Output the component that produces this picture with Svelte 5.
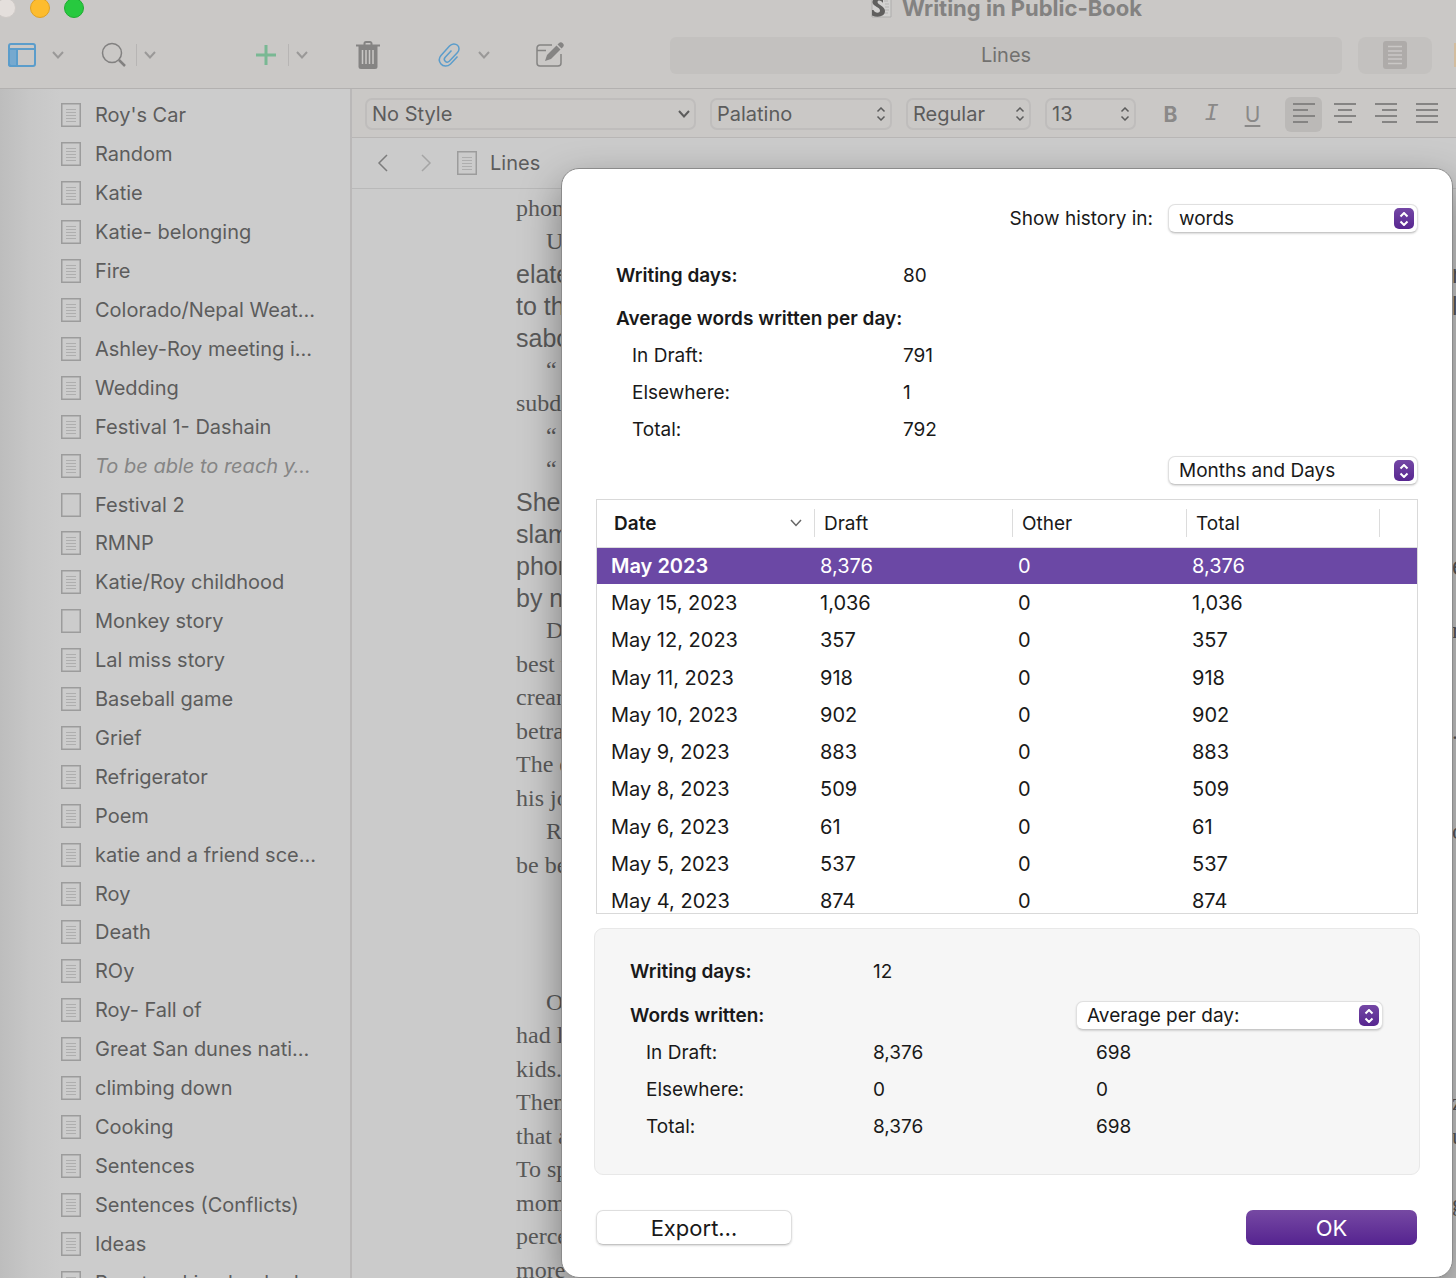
<script>
    const scenes = [
        "Roy's Car",
        "Random",
        "Katie",
        "Katie- belonging",
        "Fire",
        "Colorado/Nepal Weat…",
        "Ashley-Roy meeting i…",
        "Wedding",
        "Festival 1- Dashain",
        "To be able to reach y…",
        "Festival 2",
        "RMNP",
        "Katie/Roy childhood",
        "Monkey story",
        "Lal miss story",
        "Baseball game",
        "Grief",
        "Refrigerator",
        "Poem",
        "katie and a friend sce…",
        "Roy",
        "Death",
        "ROy",
        "Roy- Fall of",
        "Great San dunes nati…",
        "climbing down",
        "Cooking",
        "Sentences",
        "Sentences (Conflicts)",
        "Ideas",
        "Roast making booked",
    ];
    const blank = ["Festival 2", "Monkey story"];
    const untitled = ["To be able to reach y…"];

    // [kind, first words, last letters] per line; i = indented first line
    const manuscript = [
        ["serif", "phon"],
        ["serif i", "U"],
        ["sans", "elate", "n"],
        ["sans", "to th", "l"],
        ["sans", "sabo"],
        ["serif i", "“"],
        ["serif", "subd"],
        ["serif i", "“"],
        ["serif i", "“"],
        ["sans", "She"],
        ["sans", "slam"],
        ["sans", "phon", "e"],
        ["sans", "by no"],
        ["serif i", "D", "n"],
        ["wide", "best t"],
        ["serif", "crean"],
        ["wide", "betra", "."],
        ["serif", "The e"],
        ["wide", "his jo"],
        ["serif i", "R", "o"],
        ["wide", "be be"],
        ["break", ""],
        ["wide i", "O"],
        ["serif", "had l"],
        ["wide", "kids."],
        ["serif", "Then", "z"],
        ["wide", "that a", "u"],
        ["serif", "To sp"],
        ["wide", "mom", "g"],
        ["serif", "perce"],
        ["wide", "more"],
    ];

    const history = [
        ["May 2023", "8,376", "0", "8,376"],
        ["May 15, 2023", "1,036", "0", "1,036"],
        ["May 12, 2023", "357", "0", "357"],
        ["May 11, 2023", "918", "0", "918"],
        ["May 10, 2023", "902", "0", "902"],
        ["May 9, 2023", "883", "0", "883"],
        ["May 8, 2023", "509", "0", "509"],
        ["May 6, 2023", "61", "0", "61"],
        ["May 5, 2023", "537", "0", "537"],
        ["May 4, 2023", "874", "0", "874"],
    ];

    const averages = [
        ["In Draft:", "791"],
        ["Elsewhere:", "1"],
        ["Total:", "792"],
    ];
    const written = [
        ["In Draft:", "8,376", "698"],
        ["Elsewhere:", "0", "0"],
        ["Total:", "8,376", "698"],
    ];

    // x1, x2 of the four bars of each alignment button
    const alignments = [
        { name: "Align left", bars: [[0, 22], [0, 15], [0, 22], [0, 15]] },
        { name: "Align centre", bars: [[0, 22], [4, 18], [0, 22], [4, 18]] },
        { name: "Align right", bars: [[0, 22], [7, 22], [0, 22], [7, 22]] },
        { name: "Justify", bars: [[0, 22], [0, 22], [0, 22], [0, 22]] },
    ];

    let selected = 0;
    let align = 0;
</script>

{#snippet doc(empty)}
    <svg class="doc" width="20" height="24" viewBox="0 0 20 24" aria-hidden="true">
        <rect x="0.75" y="0.75" width="18.5" height="22.5" />
        {#if !empty}
            <path d="M5 6.5h10M5 9.5h10M5 12.5h10M5 15.5h10M5 18.5h10" />
        {/if}
    </svg>
{/snippet}

{#snippet chevron()}
    <svg class="chevron" width="12" height="8" viewBox="0 0 12 8" aria-hidden="true">
        <path d="M1 1l5 5.5L11 1" />
    </svg>
{/snippet}

{#snippet stepper()}
    <svg class="stepper" width="10" height="14" viewBox="0 0 10 14" aria-hidden="true">
        <path d="M1.5 4.5L5 1l3.5 3.5M1.5 9.5L5 13l3.5-3.5" />
    </svg>
{/snippet}

{#snippet popup(id, label, value)}
    <div class="popup">
        <select {id} aria-label={label}>
            <option>{value}</option>
        </select>
        <span class="knob">{@render stepper()}</span>
    </div>
{/snippet}

<div class="window">
    <header>
        <div class="titlebar">
            <div class="lights">
                <span class="light close"></span>
                <span class="light minimise"></span>
                <span class="light zoom"></span>
            </div>
            <div class="title">
                <svg width="22" height="22" viewBox="0 0 22 22" aria-hidden="true">
                    <path d="M2 0h17l2 3v17H2z" fill="#d2d1d0" stroke="#adacab" stroke-width="1" />
                    <path d="M14 4h4M15 7h4M15 10h4M15 13h4M14 16h4" stroke="#b5b4b3" stroke-width="1" />
                    <path d="M13 6V1.500C8 0 2 1 2.500 5.500c.5 4 7.500 4.500 7.500 8 0 3-5 3-6.500-.5L2 13v5.500c6 2.500 13 1 13-4.500C15 9 7.500 8 7.500 5c0-2.500 4-2 5.500 1z" fill="#605f5e" stroke="none" />
                </svg>
                <span>Writing in Public-Book</span>
            </div>
        </div>
        <div class="toolbar">
            <div class="tools">
                <button class="blue" aria-label="View">
                    <svg width="28" height="24" viewBox="0 0 28 24">
                        <path d="M1 6h8v17H3a2 2 0 0 1-2-2z" fill="#76a9cf" />
                        <rect x="1" y="1" width="26" height="22" rx="2" />
                        <path d="M1 6h26" />
                    </svg>
                </button>
                <button class="more" aria-label="View options">{@render chevron()}</button>
                <button class="search" aria-label="Search">
                    <svg width="26" height="26" viewBox="0 0 26 26">
                        <circle cx="11" cy="11" r="9.5" />
                        <path d="M18 18l6 6" stroke-width="2.5" />
                    </svg>
                </button>
                <button class="more split" aria-label="Search options">{@render chevron()}</button>
                <button class="add" aria-label="Add">
                    <svg width="20" height="20" viewBox="0 0 20 20">
                        <path d="M10 0v20M0 10h20" />
                    </svg>
                </button>
                <button class="more split" aria-label="Add options">{@render chevron()}</button>
                <button class="trash" aria-label="Move to trash">
                    <svg width="24" height="28" viewBox="0 0 24 28">
                        <path d="M0 4.500h24M8.500 4V2.500a1.500 1.500 0 0 1 1.500-1.500h4a1.500 1.500 0 0 1 1.500 1.500V4" />
                        <path d="M2.500 5h19v20.500a2.500 2.500 0 0 1-2.500 2.500H5a2.500 2.500 0 0 1-2.500-2.500z" class="fill" />
                        <path d="M6.500 9v14M10 9v14M13.500 9v14M17 9v14" class="slot" />
                    </svg>
                </button>
                <button class="clip blue" aria-label="Bookmarks">
                    <svg width="22" height="24" viewBox="0 0 22 24">
                        <path
                            d="M19.500 13.500l-7 7.500c-3 3-7.500 2.500-9.500 0s-2.500-5.500 0-8.500l8.500-9.500c2.500-2.700 6-2.500 8-.7s2 5 0 7.200l-8 8.500c-1.300 1.300-3.200 1.300-4.300.2s-1.200-2.700 0-4L13.500 7.500"
                        />
                    </svg>
                </button>
                <button class="more" aria-label="Bookmark options">{@render chevron()}</button>
                <button class="compose" aria-label="Compose">
                    <svg width="28" height="26" viewBox="0 0 28 26">
                        <path d="M16 3H4a3 3 0 0 0-3 3v15a3 3 0 0 0 3 3h18a3 3 0 0 0 3-3v-9M1 8.500h9" stroke-width="1.500" />
                        <path d="M9 19l2-6L20.500 3.500l4 4L15 17z" class="fill" />
                        <path d="M21.500 2.500l1.300-1.300a2.700 2.700 0 0 1 4 4l-1.300 1.300z" class="fill" />
                    </svg>
                </button>
            </div>
            <input class="location" aria-label="Document" value="Lines" />
            <button class="mode" aria-label="Document view">
                <svg width="24" height="28" viewBox="0 0 24 28">
                    <rect width="24" height="28" rx="3" fill="#aeaba9" stroke="none" />
                    <path d="M5 5.500h14M5 10h14M5 14h14M5 18h14M5 22.500h14" stroke="#cac8c6" stroke-width="1.500" />
                </svg>
            </button>
            <span class="next"></span>
        </div>
    </header>

    <div class="body">
        <nav aria-label="Binder">
            <ul>
                {#each scenes as scene}
                    <li class:untitled={untitled.includes(scene)}>
                        {@render doc(blank.includes(scene))}
                        <span>{scene}</span>
                    </li>
                {/each}
            </ul>
        </nav>

        <main>
            <div class="format">
                <div class="field style">
                    <select aria-label="Style"><option>No Style</option></select>
                    {@render chevron()}
                </div>
                <div class="field font">
                    <select aria-label="Font"><option>Palatino</option></select>
                    {@render stepper()}
                </div>
                <div class="field weight">
                    <select aria-label="Weight"><option>Regular</option></select>
                    {@render stepper()}
                </div>
                <div class="field size">
                    <select aria-label="Size"><option>13</option></select>
                    {@render stepper()}
                </div>
                <div class="marks">
                    <button class="bold">B</button>
                    <button class="italic">I</button>
                    <button class="underline">U</button>
                </div>
                <div class="aligns">
                    {#each alignments as { name, bars }, i}
                        <button class:active={align === i} aria-label={name} on:click={() => (align = i)}>
                            <svg width="22" height="20" viewBox="0 0 22 20">
                                {#each bars as [x1, x2], n}
                                    <path d="M{x1} {n * 6 + 1}H{x2}" />
                                {/each}
                            </svg>
                        </button>
                    {/each}
                </div>
            </div>
            <div class="crumb">
                <button aria-label="Back">
                    <svg width="12" height="18" viewBox="0 0 12 18"><path d="M10 1L2 9l8 8" /></svg>
                </button>
                <button class="off" aria-label="Forward">
                    <svg width="12" height="18" viewBox="0 0 12 18"><path d="M2 1l8 8-8 8" /></svg>
                </button>
                {@render doc(false)}
                <span>Lines</span>
            </div>
            <div class="page">
                {#each manuscript as [kind, start, end]}
                    <div class="line {kind}">
                        <span>{start}</span>
                        {#if end}<span class="end">{end}</span>{/if}
                    </div>
                {/each}
            </div>
        </main>
    </div>

    <div class="dialog" role="dialog" aria-label="Writing history">
        <div class="unit">
            <label for="unit">Show history in:</label>
            {@render popup("unit", undefined, "words")}
        </div>

        <div class="stats">
            <div class="row lead"><b>Writing days:</b><span>80</span></div>
            <div class="row"><b>Average words written per day:</b></div>
            {#each averages as [name, value]}
                <div class="row sub"><span>{name}</span><span>{value}</span></div>
            {/each}
        </div>

        <div class="period">
            {@render popup("period", "Period", "Months and Days")}
        </div>

        <div class="history">
            <table>
                <colgroup>
                    <col class="date" />
                    <col class="draft" />
                    <col class="other" />
                    <col class="total" />
                    <col />
                </colgroup>
                <thead>
                    <tr>
                        <th class="sorted"><div>Date {@render chevron()}</div></th>
                        <th><div>Draft</div></th>
                        <th><div>Other</div></th>
                        <th><div>Total</div></th>
                        <th><div></div></th>
                    </tr>
                </thead>
                <tbody>
                    {#each history as row, i}
                        <tr class:selected={selected === i} on:click={() => (selected = i)}>
                            {#each row as cell}
                                <td>{cell}</td>
                            {/each}
                            <td></td>
                        </tr>
                    {/each}
                </tbody>
            </table>
        </div>

        <div class="panel">
            <div class="row lead"><b>Writing days:</b><span>12</span></div>
            <div class="row">
                <b>Words written:</b>
                <span></span>
                {@render popup("measure", "Measure", "Average per day:")}
            </div>
            {#each written as [name, total, average]}
                <div class="row sub"><span>{name}</span><span>{total}</span><span class="average">{average}</span></div>
            {/each}
        </div>

        <div class="actions">
            <button class="export">Export…</button>
            <button class="ok">OK</button>
        </div>
    </div>
</div>

<style>
    :global(body) {
        margin: 0;
    }
    .window {
        position: relative;
        display: flex;
        flex-direction: column;
        height: 100vh;
        overflow: hidden;
        background-color: #cbcbcb;
        color: #5c5c5c;
        font-family: Inter, "Liberation Sans", sans-serif;
        font-size: 20px;
    }
    .window * {
        box-sizing: border-box;
    }
    button,
    select,
    input {
        font: inherit;
        color: inherit;
        border: none;
        background: none;
        padding: 0;
        margin: 0;
    }
    svg {
        display: block;
        flex: none;
        fill: none;
        stroke: currentColor;
        stroke-width: 2;
    }

    /* title bar and toolbar */
    header {
        flex: none;
        background-color: #cac8c6;
        border-bottom: 1px solid #b3b1b0;
    }
    .titlebar {
        display: flex;
        height: 18px;
    }
    .lights {
        display: flex;
        gap: 14px;
        margin-left: -4px;
        margin-top: -2px;
        width: 560px;
    }
    .light {
        width: 20px;
        height: 20px;
        border-radius: 50%;
        border: 1px solid;
    }
    .close {
        background-color: #e4dfdc;
        border-color: #cfcac7;
    }
    .minimise {
        background-color: #fdbc2e;
        border-color: #dfa124;
    }
    .zoom {
        background-color: #27c93f;
        border-color: #1fac31;
    }
    .title {
        flex: 1;
        display: flex;
        justify-content: center;
        align-items: center;
        gap: 10px;
        height: 16px;
        color: #838281;
        font-size: 22px;
        font-weight: 700;
        line-height: 26px;
    }
    .toolbar {
        display: flex;
        align-items: center;
        height: 70px;
        padding: 4px 0 0 8px;
    }
    .tools {
        display: flex;
        align-items: center;
        width: 662px;
        color: #828180;
    }
    .blue {
        color: #5b9dcb;
    }
    .more {
        display: flex;
        align-items: center;
        height: 22px;
        margin-left: 16px;
        color: #9a9998;
    }
    .split {
        border-left: 1px solid #b7b5b4;
        margin-left: 9px;
        padding-left: 7px;
    }
    .search {
        margin-left: 37px;
    }
    .search svg {
        stroke-width: 1.5;
    }
    .add {
        margin-left: 100px;
        color: #79b893;
    }
    .add svg {
        stroke-width: 3;
    }
    .add + .split {
        margin-left: 12px;
    }
    .trash {
        margin-left: 48px;
    }
    .trash svg,
    .compose svg {
        color: #858483;
    }
    .fill {
        fill: currentColor;
        stroke: none;
    }
    .slot {
        stroke: #cac8c6;
        stroke-width: 1.5;
    }
    .clip {
        margin-left: 58px;
    }
    .clip svg {
        stroke-width: 1.5;
        overflow: visible;
    }
    .clip + .more {
        margin-left: 18px;
    }
    .compose {
        margin-left: 46px;
    }
    .location {
        flex: 1;
        min-width: 0;
        height: 37px;
        border-radius: 6px;
        background-color: #c3c1bf;
        color: #72716f;
        text-align: center;
    }
    .mode {
        display: flex;
        align-items: center;
        justify-content: center;
        width: 74px;
        height: 37px;
        margin-left: 16px;
        border-radius: 8px;
        background-color: #c3c1bf;
    }
    .next {
        width: 2px;
        height: 24px;
        margin-left: 22px;
        background-color: #d3bd9f;
    }

    /* binder */
    .body {
        flex: 1;
        display: flex;
        min-height: 0;
    }
    nav {
        flex: none;
        width: 352px;
        overflow: hidden;
        border-right: 2px solid #bab8b8;
        background: linear-gradient(to right, #bdbdbd, #c7c7c7 30px, #cccccc 60px);
    }
    ul {
        display: flex;
        flex-direction: column;
        height: calc(100% + 24px);
        margin: 0;
        padding: 7px 0 0 61px;
        list-style-type: none;
    }
    li {
        flex: 1 0 38px;
        display: flex;
        align-items: center;
        gap: 14px;
        white-space: nowrap;
    }
    .doc {
        color: #9c9c9c;
        stroke-width: 1.5;
    }
    .doc path {
        stroke: #aeaeae;
        stroke-width: 1;
    }
    .untitled {
        color: #858585;
        font-style: italic;
    }

    /* editor */
    main {
        flex: 1;
        min-width: 0;
        display: flex;
        flex-direction: column;
    }
    .format {
        flex: none;
        display: flex;
        align-items: center;
        height: 49px;
        padding: 2px 0 0 13px;
        background-color: #cac8c6;
        border-bottom: 1px solid #b8b6b5;
    }
    .field {
        display: flex;
        align-items: center;
        height: 32px;
        margin-right: 14px;
        padding-right: 4px;
        border: 2px solid #bfbdbc;
        border-radius: 7px;
    }
    .style {
        width: 331px;
    }
    .font {
        width: 182px;
    }
    .weight {
        width: 125px;
    }
    .size {
        width: 91px;
    }
    .stepper {
        stroke-width: 1.5;
    }
    select {
        flex: 1;
        min-width: 0;
        appearance: none;
        height: 28px;
        padding-left: 5px;
        outline: none;
    }
    .marks {
        display: flex;
        gap: 20px;
        margin-left: 10px;
        color: #8a8988;
        font-size: 21px;
    }
    .marks button {
        width: 21px;
    }
    .bold {
        font-weight: 700;
    }
    .italic {
        font-family: "Liberation Mono", monospace;
        font-size: 24px;
        font-style: italic;
        line-height: 24px;
    }
    .underline {
        text-decoration: underline;
        text-underline-offset: 3px;
    }
    .aligns {
        display: flex;
        gap: 4px;
        margin-left: 22px;
        color: #858483;
    }
    .aligns button {
        display: flex;
        justify-content: center;
        width: 37px;
        height: 35px;
        padding-top: 6px;
        border-radius: 6px;
    }
    .aligns .active {
        background-color: #bbb9b7;
    }
    .crumb {
        flex: none;
        display: flex;
        align-items: center;
        height: 51px;
        padding-left: 25px;
        border-bottom: 1px solid #b9b9b9;
    }
    .crumb svg {
        stroke-width: 1.5;
    }
    .crumb button {
        margin-right: 31px;
        color: #7c7c7c;
    }
    .crumb .off {
        margin-right: 25px;
        color: #a5a5a5;
    }
    .crumb span {
        margin-left: 13px;
    }
    .page {
        flex: 1;
        overflow: hidden;
        padding: 3px 0 0 164px;
        color: #5a5a5a;
        white-space: nowrap;
    }
    .line {
        display: flex;
        justify-content: space-between;
        height: 33px;
        line-height: 33px;
        font-family: "Palatino Linotype", Palatino, "Liberation Serif", serif;
        font-size: 24px;
    }
    .wide {
        height: 34px;
        line-height: 34px;
    }
    .sans {
        height: 32px;
        font-family: "Liberation Sans", Arial, sans-serif;
        font-size: 25px;
        line-height: 32px;
    }
    .i {
        padding-left: 30px;
    }
    .break {
        height: 103px;
    }
    .end {
        width: 4px;
    }

    /* writing history sheet */
    .dialog {
        position: absolute;
        top: 168px;
        left: 561px;
        right: 3px;
        padding: 35px 32px 32px;
        border: 1px solid #8b8b8b;
        border-radius: 18px;
        background-color: #fff;
        box-shadow: 0 16px 40px rgba(0, 0, 0, 0.4);
        color: #191919;
        font-size: 19px;
    }
    .unit,
    .period {
        display: flex;
        justify-content: flex-end;
        align-items: center;
        gap: 15px;
        padding-right: 2px;
    }
    .popup {
        display: flex;
        align-items: center;
        width: 250px;
        height: 29px;
        padding-right: 3px;
        border: 1px solid #e0e0e0;
        border-bottom-color: #c8c8c8;
        border-radius: 7px;
        background-color: #fff;
        box-shadow: 0 1px 2px rgba(0, 0, 0, 0.15);
    }
    .popup select {
        height: 27px;
        padding-left: 10px;
    }
    .knob {
        display: flex;
        align-items: center;
        justify-content: center;
        width: 20px;
        height: 21px;
        border-radius: 5px;
        background: linear-gradient(#7447a5, #572690);
        color: #fff;
    }
    .knob :global(svg) {
        stroke-width: 2;
    }
    .stats {
        padding: 24px 0 8px 22px;
    }
    .row {
        display: grid;
        grid-template-columns: 287px 1fr;
        align-items: center;
        height: 37px;
        white-space: nowrap;
    }
    .lead {
        margin-bottom: 6px;
    }
    .sub span:first-child {
        padding-left: 16px;
    }
    b {
        font-weight: 600;
    }
    .history {
        height: 415px;
        margin: 14px 2px 0;
        overflow: hidden;
        border: 1px solid #d9d9d9;
        font-size: 20px;
    }
    table {
        width: 100%;
        height: 420px;
        table-layout: fixed;
        border-collapse: collapse;
    }
    .date {
        width: 217px;
    }
    .draft {
        width: 198px;
    }
    .other {
        width: 174px;
    }
    .total {
        width: 193px;
    }
    th {
        height: 47px;
        padding: 0;
        border-bottom: 1px solid #dcdcdc;
        font-size: 19px;
        font-weight: 400;
        text-align: left;
    }
    th div {
        display: flex;
        align-items: center;
        justify-content: space-between;
        height: 28px;
        padding-left: 9px;
        border-left: 1px solid #dcdcdc;
    }
    .sorted {
        font-weight: 600;
    }
    .sorted div {
        padding: 0 12px 0 17px;
        border: none;
    }
    .sorted :global(svg) {
        color: #666;
        stroke-width: 1.5;
    }
    td {
        height: 37px;
        padding: 0 0 0 6px;
    }
    td:first-child {
        padding-left: 14px;
    }
    .selected {
        background-color: #6b48a5;
        color: #fff;
    }
    .selected td:first-child {
        font-weight: 600;
    }
    .panel {
        margin-top: 14px;
        padding: 24px 36px 29px 35px;
        border: 1px solid #e8e8e8;
        border-radius: 9px;
        background-color: #f6f6f6;
    }
    .panel .row {
        grid-template-columns: 243px 203px 1fr;
    }
    .panel .lead {
        margin-bottom: 7px;
    }
    .panel .popup {
        width: auto;
    }
    .panel .average {
        padding-left: 20px;
    }
    .actions {
        display: flex;
        justify-content: space-between;
        margin: 35px 3px 0 2px;
        font-size: 22px;
    }
    .actions button {
        height: 35px;
        border-radius: 7px;
    }
    .actions .export {
        width: 196px;
        border: 1px solid #dedede;
        border-bottom-color: #c4c4c4;
        box-shadow: 0 1px 2px rgba(0, 0, 0, 0.15);
    }
    .actions .ok {
        width: 171px;
        background: linear-gradient(#7649a3, #552390);
        color: #fff;
    }
</style>
